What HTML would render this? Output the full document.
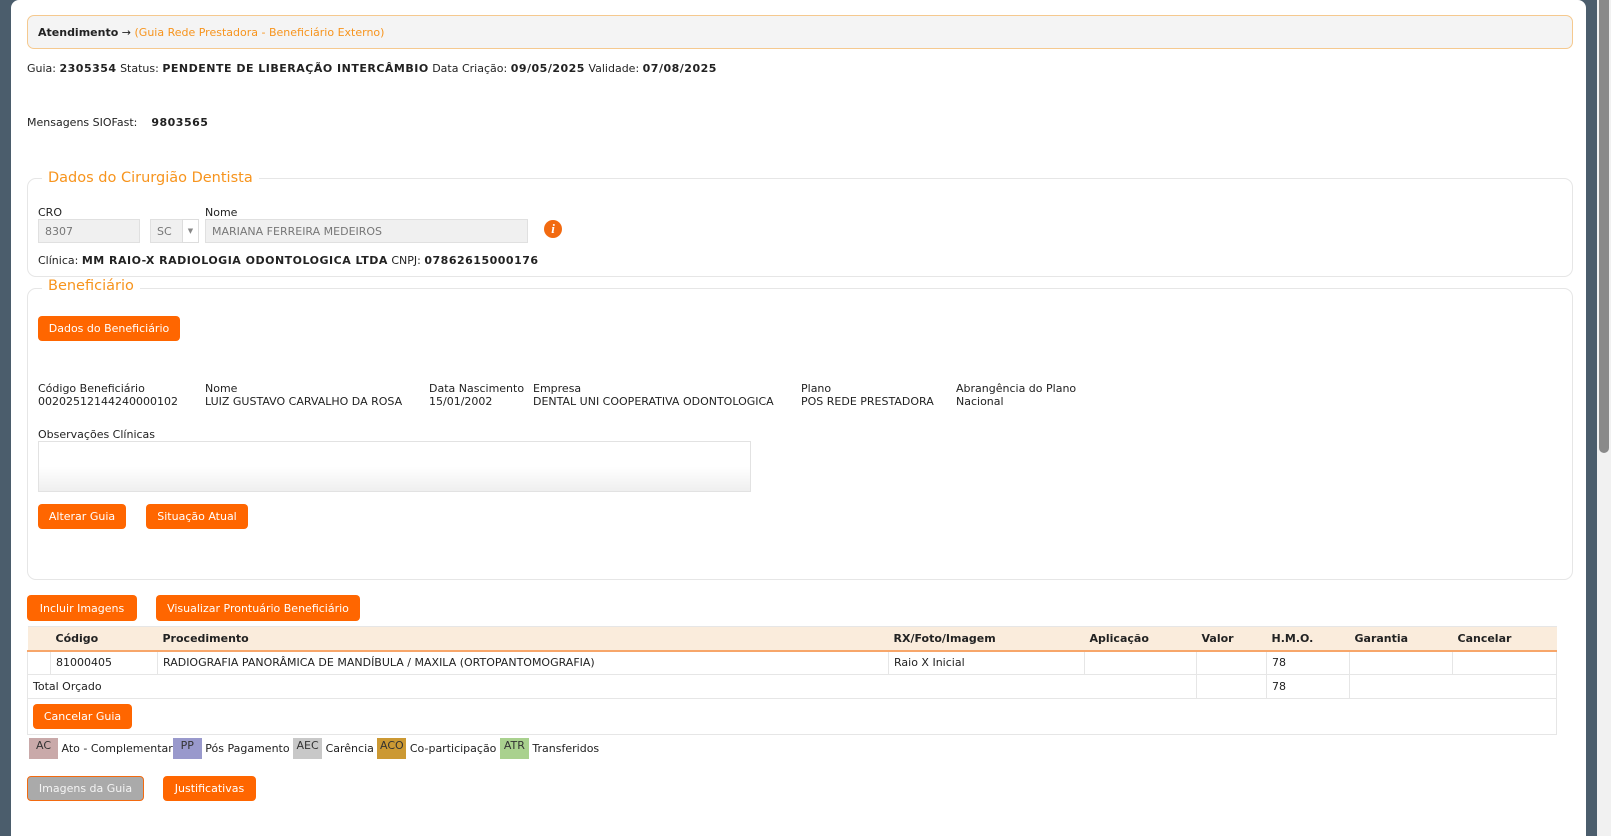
<!DOCTYPE html>
<html><head><meta charset="utf-8"><style>
*{box-sizing:border-box;margin:0;padding:0}
body{width:1611px;height:836px;overflow:hidden;background:#4b5d6c;font-family:"DejaVu Sans","Liberation Sans",sans-serif;font-size:11px;color:#222;position:relative}
.a{position:absolute;white-space:nowrap}
#panel{position:absolute;left:11px;top:0;width:1575px;height:836px;background:#fff;border-radius:8px 8px 0 0}
#sbt{position:absolute;left:1597px;top:0;width:14px;height:836px;background:#f1f1f1}
#sb{position:absolute;left:1599px;top:0;width:10px;height:453px;background:#8a8a8a;border-radius:0 0 5px 5px}
.btn{position:absolute;background:#ff6600;color:#fff;border-radius:4px;font-size:11px;display:flex;align-items:center;justify-content:center;white-space:nowrap}
.fs{position:absolute;border:1px solid #e6e6e6;border-radius:9px}
.lg{position:absolute;background:#fff;color:#f7941d;font-size:14.5px;padding:0 6px}
.inp{position:absolute;background:#f0f0f0;border:1px solid #e0e0e0;color:#777;font-size:11px;padding-left:6px;display:flex;align-items:center}
b{font-weight:bold;letter-spacing:0.5px}
table{position:absolute;left:27px;top:626px;width:1530px;border-collapse:collapse;font-size:11px}
td,th{border:1px solid #e6e6e6;text-align:left;padding:0 5px;height:24px;font-weight:normal}
th{background:#faecdc;font-weight:bold;border-bottom:2px solid #f7a66a;border-left:none;border-right:none}
.tag{display:inline-block;width:29px;text-align:center;height:21px;line-height:15px;vertical-align:top;color:#333}
</style></head><body>
<div id="panel"></div>
<div id="sbt"></div><div id="sb"></div>

<div class="a" style="left:27px;top:15px;width:1546px;height:34px;background:#f4f4f4;border:1px solid #f5c98f;border-radius:7px"></div>
<div class="a" style="left:38px;top:26px"><b style="letter-spacing:0">Atendimento</b> → <span style="color:#f7941d">(Guia Rede Prestadora - Beneficiário Externo)</span></div>
<div class="a" style="left:27px;top:62px">Guia: <b>2305354</b> Status: <b>PENDENTE DE LIBERAÇÃO INTERCÂMBIO</b> Data Criação: <b>09/05/2025</b> Validade: <b>07/08/2025</b></div>
<div class="a" style="left:27px;top:116px">Mensagens SIOFast: &nbsp;&nbsp;&nbsp;<b>9803565</b></div>

<div class="fs" style="left:27px;top:178px;width:1546px;height:99px"></div>
<div class="lg" style="left:42px;top:170px">Dados do Cirurgião Dentista</div>
<div class="a" style="left:38px;top:206px">CRO</div>
<div class="a" style="left:205px;top:206px">Nome</div>
<div class="inp" style="left:38px;top:219px;width:102px;height:24px">8307</div>
<div class="inp" style="left:150px;top:219px;width:49px;height:24px;background:#f0f0f0">SC<span style="position:absolute;left:31px;top:-1px;width:17px;height:24px;border:1px solid #ddd;background:#fff;font-size:7px;color:#888;display:flex;align-items:center;justify-content:center">▼</span></div>
<div class="inp" style="left:205px;top:219px;width:323px;height:24px">MARIANA FERREIRA MEDEIROS</div>
<div class="a" style="left:544px;top:220px;width:18px;height:18px;border-radius:50%;background:#f26a10;color:#fff;font:bold italic 13px 'Liberation Serif',serif;text-align:center;line-height:18px">i</div>
<div class="a" style="left:38px;top:254px">Clínica: <b>MM RAIO-X RADIOLOGIA ODONTOLOGICA LTDA</b> CNPJ: <b>07862615000176</b></div>

<div class="fs" style="left:27px;top:288px;width:1546px;height:292px"></div>
<div class="lg" style="left:42px;top:278px">Beneficiário</div>
<div class="btn" style="left:38px;top:316px;width:142px;height:25px">Dados do Beneficiário</div>
<div class="a" style="left:38px;top:382px">Código Beneficiário<br>00202512144240000102</div>
<div class="a" style="left:205px;top:382px">Nome<br>LUIZ GUSTAVO CARVALHO DA ROSA</div>
<div class="a" style="left:429px;top:382px">Data Nascimento<br>15/01/2002</div>
<div class="a" style="left:533px;top:382px">Empresa<br>DENTAL UNI COOPERATIVA ODONTOLOGICA</div>
<div class="a" style="left:801px;top:382px">Plano<br>POS REDE PRESTADORA</div>
<div class="a" style="left:956px;top:382px">Abrangência do Plano<br>Nacional</div>
<div class="a" style="left:38px;top:428px">Observações Clínicas</div>
<div class="a" style="left:38px;top:441px;width:713px;height:51px;border:1px solid #e2e2e2;background:linear-gradient(#fff 50%,#efefef)"></div>
<div class="btn" style="left:38px;top:504px;width:88px;height:25px">Alterar Guia</div>
<div class="btn" style="left:146px;top:504px;width:102px;height:25px">Situação Atual</div>

<div class="btn" style="left:27px;top:595px;width:110px;height:26px">Incluir Imagens</div>
<div class="btn" style="left:156px;top:595px;width:204px;height:26px">Visualizar Prontuário Beneficiário</div>

<table>
<tr><th style="width:23px"></th><th style="width:107px">Código</th><th style="width:731px">Procedimento</th><th style="width:196px">RX/Foto/Imagem</th><th style="width:112px">Aplicação</th><th style="width:70px">Valor</th><th style="width:83px">H.M.O.</th><th style="width:103px">Garantia</th><th>Cancelar</th></tr>
<tr><td></td><td>81000405</td><td>RADIOGRAFIA PANORÂMICA DE MANDÍBULA / MAXILA (ORTOPANTOMOGRAFIA)</td><td>Raio X Inicial</td><td></td><td></td><td>78</td><td></td><td></td></tr>
<tr><td colspan="5">Total Orçado</td><td></td><td>78</td><td colspan="2"></td></tr>
<tr><td colspan="9" style="height:36px"><span class="btn" style="position:static;display:inline-flex;width:99px;height:25px">Cancelar Guia</span></td></tr>
</table>

<div class="a" style="left:29px;top:738px;font-size:11px;line-height:21px">
<span class="tag" style="background:#c9a9a9">AC</span> Ato - Complementar<span class="tag" style="background:#9999cc">PP</span> Pós Pagamento <span class="tag" style="background:#c8c8c8">AEC</span> Carência <span class="tag" style="background:#cc9933">ACO</span> Co-participação <span class="tag" style="background:#a9d18e">ATR</span> Transferidos</div>

<div class="btn" style="left:27px;top:776px;width:117px;height:25px;background:#aaaaaa;border:1px solid #f26a10;color:#f4f4f4">Imagens da Guia</div>
<div class="btn" style="left:163px;top:776px;width:93px;height:25px">Justificativas</div>
</body></html>
